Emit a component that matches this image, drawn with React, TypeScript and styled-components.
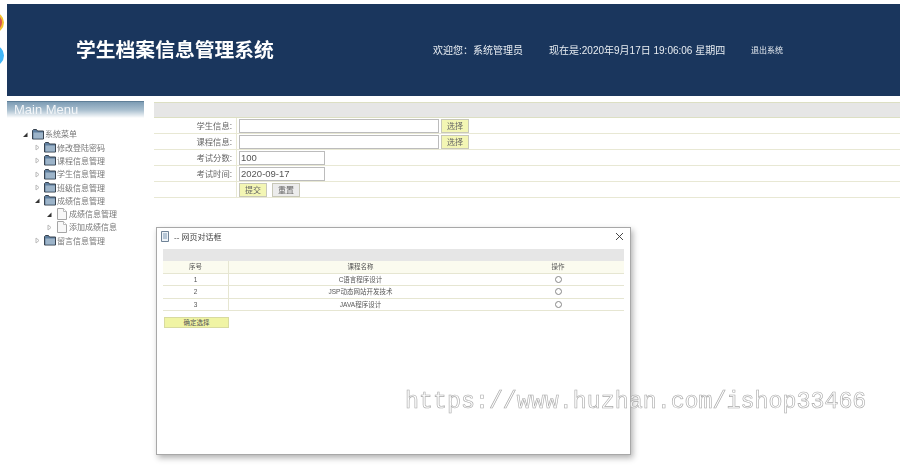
import React from "react";
import styled, { createGlobalStyle } from "styled-components";

const Global = createGlobalStyle`
  html, body { margin: 0; padding: 0; background: #fff; }
  body { font-family: "Liberation Sans", "Noto Sans CJK SC", sans-serif; overflow: hidden; }
`;

const Page = styled.div`
  position: relative;
  width: 900px;
  height: 473px;
  overflow: hidden;
  padding: 4px 0 0 7px;
  box-sizing: border-box;
`;

const Bubble = styled.div<{ $top: number; $bg: string; $border: string }>`
  position: absolute;
  left: -17px;
  top: ${(p) => p.$top}px;
  width: 21px;
  height: 21px;
  border-radius: 50%;
  background: ${(p) => p.$bg};
  border: 2px solid ${(p) => p.$border};
  box-sizing: border-box;
`;

const Header = styled.header`
  height: 92px;
  background: #1a365d;
  display: flex;
  align-items: center;
  color: #fff;
  padding-left: 69px;
`;

const Title = styled.h1`
  margin: 0;
  width: 357px;
  font-size: 19.8px;
  line-height: 24px;
  font-weight: 700;
  white-space: nowrap;
  filter: blur(0.4px);
`;

const HeaderText = styled.span<{ $size: number; $width: number }>`
  font-size: ${(p) => p.$size}px;
  width: ${(p) => p.$width}px;
  margin-bottom: 2px;
  white-space: nowrap;
  color: #e8edf2;
  filter: blur(0.4px);
`;

const Body = styled.div`
  display: flex;
  margin-top: 5px;
  gap: 10px;
  align-items: flex-start;
`;

const Sidebar = styled.aside`
  width: 137px;
  flex: none;
`;

const MenuTitle = styled.div`
  height: 17px;
  box-sizing: border-box;
  border-top: 1px solid #5f7f98;
  background: linear-gradient(#7d9cb4, #a9bfcf 50%, #fff);
  color: #f2f5f8;
  font-size: 13px;
  line-height: 15px;
  padding-left: 7px;
  filter: blur(0.4px);
`;

const Tree = styled.ul`
  list-style: none;
  margin: 9.7px 0 0;
  padding: 0;
`;

const TreeRow = styled.li<{ $level: number }>`
  height: 13.3px;
  display: flex;
  align-items: center;
  padding-left: ${(p) => 14 + p.$level * 12}px;
  font-size: 8px;
  color: #777;
  white-space: nowrap;
`;

const TreeLabel = styled.span`
  margin: 0 0 1px 1px;
  filter: blur(0.45px);
`;

const Main = styled.main`
  flex: 1;
  margin-top: 1px;
`;

const FormHead = styled.div`
  height: 14px;
  background: #e6e6e6;
  border-top: 1px solid #dcdfc3;
  border-bottom: 1px solid #dcdfc3;
`;

const FormRow = styled.div`
  display: grid;
  grid-template-columns: 83px 1fr;
  height: 16px;
  box-sizing: border-box;
  border-bottom: 1px solid #e8e8d4;
  font-size: 8.3px;
  color: #666;
`;

const FormLabel = styled.label`
  display: flex;
  align-items: center;
  justify-content: flex-end;
  padding: 0 4px 2px 0;
  border-right: 1px solid #e8e8d4;
  filter: blur(0.45px);
`;

const FormValue = styled.div`
  display: flex;
  align-items: center;
  gap: 2px;
  padding-left: 2px;
`;

const TextInput = styled.input<{ $w: number }>`
  width: ${(p) => p.$w}px;
  height: 14px;
  box-sizing: border-box;
  border: 1px solid #bcbcbc;
  padding: 0 1px;
  margin: 0;
  font: 9.5px "Liberation Sans", sans-serif;
  color: #555;
  background: #fff;
  border-radius: 0;
  outline: none;
  filter: blur(0.25px);
`;

const SmallButton = styled.button<{ $yellow?: boolean }>`
  width: 28px;
  height: 14px;
  box-sizing: border-box;
  border: 1px solid #c8c8b8;
  background: ${(p) => (p.$yellow ? "#f3f6b4" : "#ececec")};
  font: 8px "Liberation Sans", "Noto Sans CJK SC", sans-serif;
  color: #666;
  padding: 0;
  margin: 0;
  border-radius: 0;
  filter: blur(0.3px);
`;

const ActionGap = styled.div`
  display: flex;
  gap: 5px;
`;

const Dialog = styled.section`
  position: absolute;
  left: 156px;
  top: 227px;
  width: 475px;
  height: 228px;
  box-sizing: border-box;
  background: #fff;
  border: 1px solid #a8a8a8;
  box-shadow: 2px 3px 6px rgba(0, 0, 0, 0.3);
  padding: 0 6px 0 6px;
`;

const DialogTop = styled.div`
  height: 21px;
  box-sizing: border-box;
  padding-bottom: 5px;
  margin: 0 -1px 0 -3px;
  display: flex;
  align-items: center;
  gap: 4px;
  font-size: 8px;
  color: #444;
`;

const DialogTitle = styled.span`
  flex: 1;
  filter: blur(0.3px);
`;

const DialogGrey = styled.div`
  height: 12px;
  background: #e6e6e6;
`;

const DialogRow = styled.div<{ $head?: boolean }>`
  display: grid;
  grid-template-columns: 66px 263px 1fr;
  height: 12.5px;
  box-sizing: border-box;
  border-bottom: 1px solid #e6e6d2;
  background: ${(p) => (p.$head ? "#fbfbef" : "#fff")};
  font-size: 6.5px;
  color: #555;
  text-align: center;
`;

const DialogCell = styled.div<{ $divider?: boolean }>`
  display: flex;
  align-items: center;
  justify-content: center;
  line-height: 11px;
  filter: blur(0.3px);
  border-right: ${(p) => (p.$divider ? "1px solid #e6e6d2" : "none")};
`;

const OpCell = styled(DialogCell)`
  filter: none;
`;

const Radio = styled.input`
  appearance: none;
  width: 7px;
  height: 7px;
  border: 1px solid #888;
  border-radius: 50%;
  margin: 0;
  background: #fff;
`;

const Confirm = styled.button`
  display: block;
  margin: 6px 0 0 1px;
  width: 65px;
  height: 11px;
  box-sizing: border-box;
  padding: 0;
  border: 1px solid #d8dba0;
  border-radius: 0;
  background: #f0f4a4;
  font: 6.5px/9px "Liberation Sans", "Noto Sans CJK SC", sans-serif;
  color: #555;
`;

const Watermark = styled.div`
  position: absolute;
  left: 405px;
  top: 387px;
  font-family: "Liberation Mono", monospace;
  font-size: 23.3px;
  line-height: 30px;
  white-space: nowrap;
  color: rgba(255, 255, 255, 0.6);
  -webkit-text-stroke: 0.6px #a8a8a8;
  filter: blur(0.15px);
`;

const Folder = () => (
  <svg width="12" height="11" viewBox="0 0 12 11" style={{ flex: "none" }}>
    <path d="M.5 10V1.5L1.5.5h3l1 1.5h6V10z" fill="#5f7f9f" stroke="#39434f" />
    <path d="M1.5 3.5h9.5v6H1.5z" fill="#9db4c9" />
  </svg>
);

const FileIcon = () => (
  <svg width="12" height="12" viewBox="0 0 12 12" style={{ flex: "none" }}>
    <path d="M1.5.5h6l3 3v8h-9z" fill="#f8f8f8" stroke="#a5a5a5" />
    <path d="M7.5.5v3h3" fill="#fff" stroke="#bbb" />
  </svg>
);

const Arrow = ({ open }: { open?: boolean }) => (
  <svg width="9" height="9" viewBox="0 0 9 9" style={{ flex: "none", marginRight: 2 }}>
    {open ? <path d="M6.5 2.5v4.5H2z" fill="#333" /> : <path d="M3 2l3 2.5L3 7z" fill="#fff" stroke="#b9b9b9" />}
  </svg>
);

const DocIcon = () => (
  <svg width="10" height="11" viewBox="0 0 10 11" style={{ flex: "none" }}>
    <path d="M1.5.5h7v10h-7z" fill="#eef3f8" stroke="#6f8397" />
    <path d="M3 3h4M3 5h4M3 7h4" stroke="#7f9ab5" />
  </svg>
);

const CloseIcon = () => (
  <svg width="9" height="9" viewBox="0 0 9 9" style={{ flex: "none", marginRight: 1 }}>
    <path d="M1 1l7 7M8 1L1 8" stroke="#333" strokeWidth="0.9" />
  </svg>
);

const tree = [
  { label: "系统菜单", level: 0, open: true },
  { label: "修改登陆密码", level: 1 },
  { label: "课程信息管理", level: 1 },
  { label: "学生信息管理", level: 1 },
  { label: "班级信息管理", level: 1 },
  { label: "成绩信息管理", level: 1, open: true },
  { label: "成绩信息管理", level: 2, open: true, file: true },
  { label: "添加成绩信息", level: 2, file: true },
  { label: "留言信息管理", level: 1 },
];

const courses = ["C语言程序设计", "JSP动态网站开发技术", "JAVA程序设计"];

export default function App() {
  return (
    <Page>
      <Global />
      <Bubble $top={12} $bg="#d9534f" $border="#f2c230" />
      <Bubble $top={45} $bg="#41b6f8" $border="#41b6f8" />
      <Header>
        <Title>学生档案信息管理系统</Title>
        <HeaderText $size={10} $width={116}>欢迎您：系统管理员</HeaderText>
        <HeaderText $size={10} $width={202}>现在是:2020年9月17日 19:06:06 星期四</HeaderText>
        <HeaderText $size={8} $width={40}>退出系统</HeaderText>
      </Header>
      <Body>
        <Sidebar>
          <MenuTitle>Main Menu</MenuTitle>
          <Tree>
            {tree.map((t, i) => (
              <TreeRow key={i} $level={t.level}>
                <Arrow open={t.open} />
                {t.file ? <FileIcon /> : <Folder />}
                <TreeLabel>{t.label}</TreeLabel>
              </TreeRow>
            ))}
          </Tree>
        </Sidebar>
        <Main>
          <FormHead />
          <FormRow>
            <FormLabel>学生信息:</FormLabel>
            <FormValue>
              <TextInput $w={200} readOnly />
              <SmallButton $yellow>选择</SmallButton>
            </FormValue>
          </FormRow>
          <FormRow>
            <FormLabel>课程信息:</FormLabel>
            <FormValue>
              <TextInput $w={200} readOnly />
              <SmallButton $yellow>选择</SmallButton>
            </FormValue>
          </FormRow>
          <FormRow>
            <FormLabel>考试分数:</FormLabel>
            <FormValue>
              <TextInput $w={86} defaultValue="100" />
            </FormValue>
          </FormRow>
          <FormRow>
            <FormLabel>考试时间:</FormLabel>
            <FormValue>
              <TextInput $w={86} defaultValue="2020-09-17" />
            </FormValue>
          </FormRow>
          <FormRow>
            <FormLabel />
            <FormValue>
              <ActionGap>
                <SmallButton $yellow>提交</SmallButton>
                <SmallButton>重置</SmallButton>
              </ActionGap>
            </FormValue>
          </FormRow>
        </Main>
      </Body>
      <Dialog>
        <DialogTop>
          <DocIcon />
          <DialogTitle>-- 网页对话框</DialogTitle>
          <CloseIcon />
        </DialogTop>
        <DialogGrey />
        <DialogRow $head>
          <DialogCell $divider>序号</DialogCell>
          <DialogCell>课程名称</DialogCell>
          <DialogCell>操作</DialogCell>
        </DialogRow>
        {courses.map((c, i) => (
          <DialogRow key={c}>
            <DialogCell $divider>{i + 1}</DialogCell>
            <DialogCell>{c}</DialogCell>
            <OpCell>
              <Radio type="radio" name="course" />
            </OpCell>
          </DialogRow>
        ))}
        <Confirm>确定选择</Confirm>
      </Dialog>
      <Watermark>https://www.huzhan.com/ishop33466</Watermark>
    </Page>
  );
}
